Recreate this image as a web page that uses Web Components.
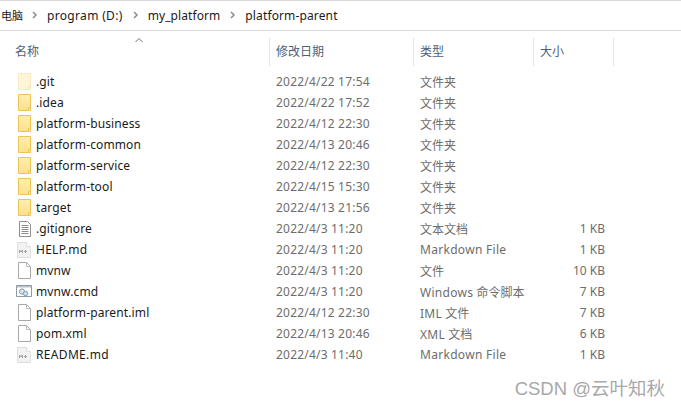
<!DOCTYPE html>
<html lang="zh"><head><meta charset="utf-8"><title>platform-parent</title>
<style>
html,body{margin:0;padding:0;background:#fff;width:681px;height:407px;overflow:hidden;font-family:"Noto Sans","Noto Sans CJK SC",sans-serif}
</style></head><body>
<explorer-window>
<bread-crumbs><span>电脑</span><span>program (D:)</span><span>my_platform</span><span>platform-parent</span></bread-crumbs>
<list-header></list-header>
<file-list>
<file-row icon="folder-faint" name=".git" date="2022/4/22 17:54" type="文件夹"></file-row>
<file-row icon="folder-hidden" name=".idea" date="2022/4/22 17:52" type="文件夹"></file-row>
<file-row icon="folder" name="platform-business" date="2022/4/12 22:30" type="文件夹"></file-row>
<file-row icon="folder" name="platform-common" date="2022/4/13 20:46" type="文件夹"></file-row>
<file-row icon="folder" name="platform-service" date="2022/4/12 22:30" type="文件夹"></file-row>
<file-row icon="folder" name="platform-tool" date="2022/4/15 15:30" type="文件夹"></file-row>
<file-row icon="folder" name="target" date="2022/4/13 21:56" type="文件夹"></file-row>
<file-row icon="text" name=".gitignore" date="2022/4/3 11:20" type="文本文档" size="1 KB"></file-row>
<file-row icon="md" name="HELP.md" date="2022/4/3 11:20" type="Markdown File" size="1 KB" style="--ls:.28px"></file-row>
<file-row icon="file" name="mvnw" date="2022/4/3 11:20" type="文件" size="10 KB"></file-row>
<file-row icon="cmd" name="mvnw.cmd" date="2022/4/3 11:20" type="Windows 命令脚本" size="7 KB"></file-row>
<file-row icon="file" name="platform-parent.iml" date="2022/4/12 22:30" type="IML 文件" size="7 KB"></file-row>
<file-row icon="file" name="pom.xml" date="2022/4/13 20:46" type="XML 文档" size="6 KB"></file-row>
<file-row icon="md" name="README.md" date="2022/4/3 11:40" type="Markdown File" size="1 KB" style="--ls:.33px"></file-row>
</file-list>
<water-mark>CSDN @云叶知秋</water-mark>
</explorer-window>
<script>
const def=(name,html,init)=>customElements.define(name,class extends HTMLElement{
  constructor(){super();this.attachShadow({mode:'open'})}
  connectedCallback(){this.shadowRoot.innerHTML=typeof html==='function'?html(this):html;init&&init(this)}
});
def('explorer-window',`<style>:host{display:block;position:relative;width:681px;height:407px;overflow:hidden;background:#fff}</style><slot></slot>`);
def('bread-crumbs',`<style>
:host{display:flex;align-items:center;height:29px;border-top:1px solid #d9d9d9;border-bottom:1px solid #d9d9d9;font-size:12px;color:#1a1a1a;white-space:nowrap}
#w{display:flex;align-items:center;height:28px;margin:-1px 0 0 1px}
::slotted(span){display:block}
::slotted(span:nth-child(1)){margin-right:24px;font-size:11px}
::slotted(span:nth-child(2)){margin-right:25px;letter-spacing:.33px}
::slotted(span:nth-child(3)){margin-right:25px;letter-spacing:.08px}
::slotted(span:nth-child(4)){letter-spacing:.13px}
</style><div id="w"><slot></slot></div>
<svg width="340" height="29" style="position:absolute;left:0;top:1px;pointer-events:none" fill="none" stroke="#8c8c8c" stroke-width="1.5"><path d="M33 11l3 3-3 3M134 11l3 3-3 3M231 11l3 3-3 3"/></svg>`);
def('list-header',`<style>
:host{display:grid;grid-template-columns:270px 144px 120px 80px;height:27px;margin-top:7px;font-size:12px;color:#4c607a;position:relative}
div{box-sizing:border-box;border-right:1px solid #e5e5e5;line-height:28px;padding-left:6px;white-space:nowrap}
div.first{padding-left:15px}
svg{position:absolute;left:134px;top:-1px}
</style><div class="first">名称</div><div>修改日期</div><div>类型</div><div>大小</div>
<svg width="10" height="6" fill="none" stroke="#707070" stroke-width="1"><path d="M1.5 5l3.5-3.5 3.5 3.5"/></svg>`);
def('file-list',`<style>:host{display:grid;grid-auto-rows:21px;margin-top:6px}</style><slot></slot>`);
const grad=`<defs><linearGradient id="g" x1="0" y1="0" x2="0" y2="1"><stop offset="0" stop-color="#ffeeb0"/><stop offset="1" stop-color="#fde08a"/></linearGradient></defs>`;
const icons={
 folder:`${grad}<path d="M2.5 1.5h12v16h-12z" fill="url(#g)" stroke="#ecc455"/><path d="M12.5 17.5v-3h2" fill="#fff2c4" stroke="#ecc455"/>`,
 'folder-hidden':`${grad}<path d="M2.5 1.5h12v16h-12z" fill="url(#g)" stroke="#ecc455"/><path d="M12.5 17.5v-3h2" fill="#fff2c4" stroke="#ecc455"/>`,
 'folder-faint':`<path d="M2.5 1.5h12v16h-12z" fill="#fef5d8" stroke="#f8ebc2"/><path d="M12.5 17.5v-3h2" fill="#fff" stroke="#f4e3ae"/>`,
 text:`<path d="M3.5 2.5h8l3 3v12h-11z" fill="#fff" stroke="#8f8f8f"/><path d="M5.5 6.5h7M5.5 8.5h7M5.5 10.5h7M5.5 12.5h7M5.5 14.5h7" stroke="#8a8a8a"/>`,
 file:`<path d="M2.5 1.5h8l4 4v12h-12z" fill="#fff" stroke="#a9a9a9"/><path d="M10.5 1.5v4h4" fill="none" stroke="#bdbdbd"/>`,
 md:`<path d="M1.5 2.5h9l4 4v11h-13z" fill="#f2f2f2" stroke="#dedede"/><path d="M10.5 2.5v4h4" fill="#fff" stroke="#dedede"/><path d="M3.5 13v-3l1.5 2 1.5-2v3M9.5 10v3M8 11.5h3" fill="none" stroke="#9a9a9a" stroke-width=".9"/>`,
 cmd:`<path d="M.5 3.5h15v11H.5z" fill="#fff" stroke="#8f9aa5"/><path d="M1 4h14v1.5H1z" fill="#b8c2cc"/><circle cx="6" cy="9.5" r="2.6" fill="#dde3e8" stroke="#8c98a3"/><circle cx="9.5" cy="11.5" r="2.2" fill="#cfe2f3" stroke="#6f9ec7"/>`
};
const lat=s=>s.replace(/[\x21-\x7e]+(?: [\x21-\x7e]+)*/g,m=>`<span class="l">${m}</span>`);
def('file-row',t=>`<style>
:host{display:grid;grid-template-columns:270px 144px 113px 79px;align-items:center;height:21px;font-size:12px;white-space:nowrap;color:#6d6d6d}
#n{display:flex;align-items:center;padding-left:16px;color:#1a1a1a;gap:4px;letter-spacing:var(--ls,.13px)}
svg{display:block;flex:none;margin-top:-1px}
#d,#t{padding-left:6px}
#d{letter-spacing:.2px}
.l{letter-spacing:.3px}
#s{text-align:right;padding-right:1px}
</style><div id="n"><svg width="16" height="19" viewBox="0 0 16 19">${icons[t.getAttribute('icon')]}</svg><span>${t.getAttribute('name')}</span></div><div id="d">${t.getAttribute('date')}</div><div id="t">${lat(t.getAttribute('type'))}</div><div id="s">${t.getAttribute('size')||''}</div>`);
def('water-mark',`<style>:host{position:absolute;right:16px;top:377px;font-size:18.5px;line-height:24px;color:#a8a8a8;white-space:nowrap;font-family:"Liberation Sans","Noto Sans CJK SC",sans-serif}</style><slot></slot>`);
</script>
</body></html>
